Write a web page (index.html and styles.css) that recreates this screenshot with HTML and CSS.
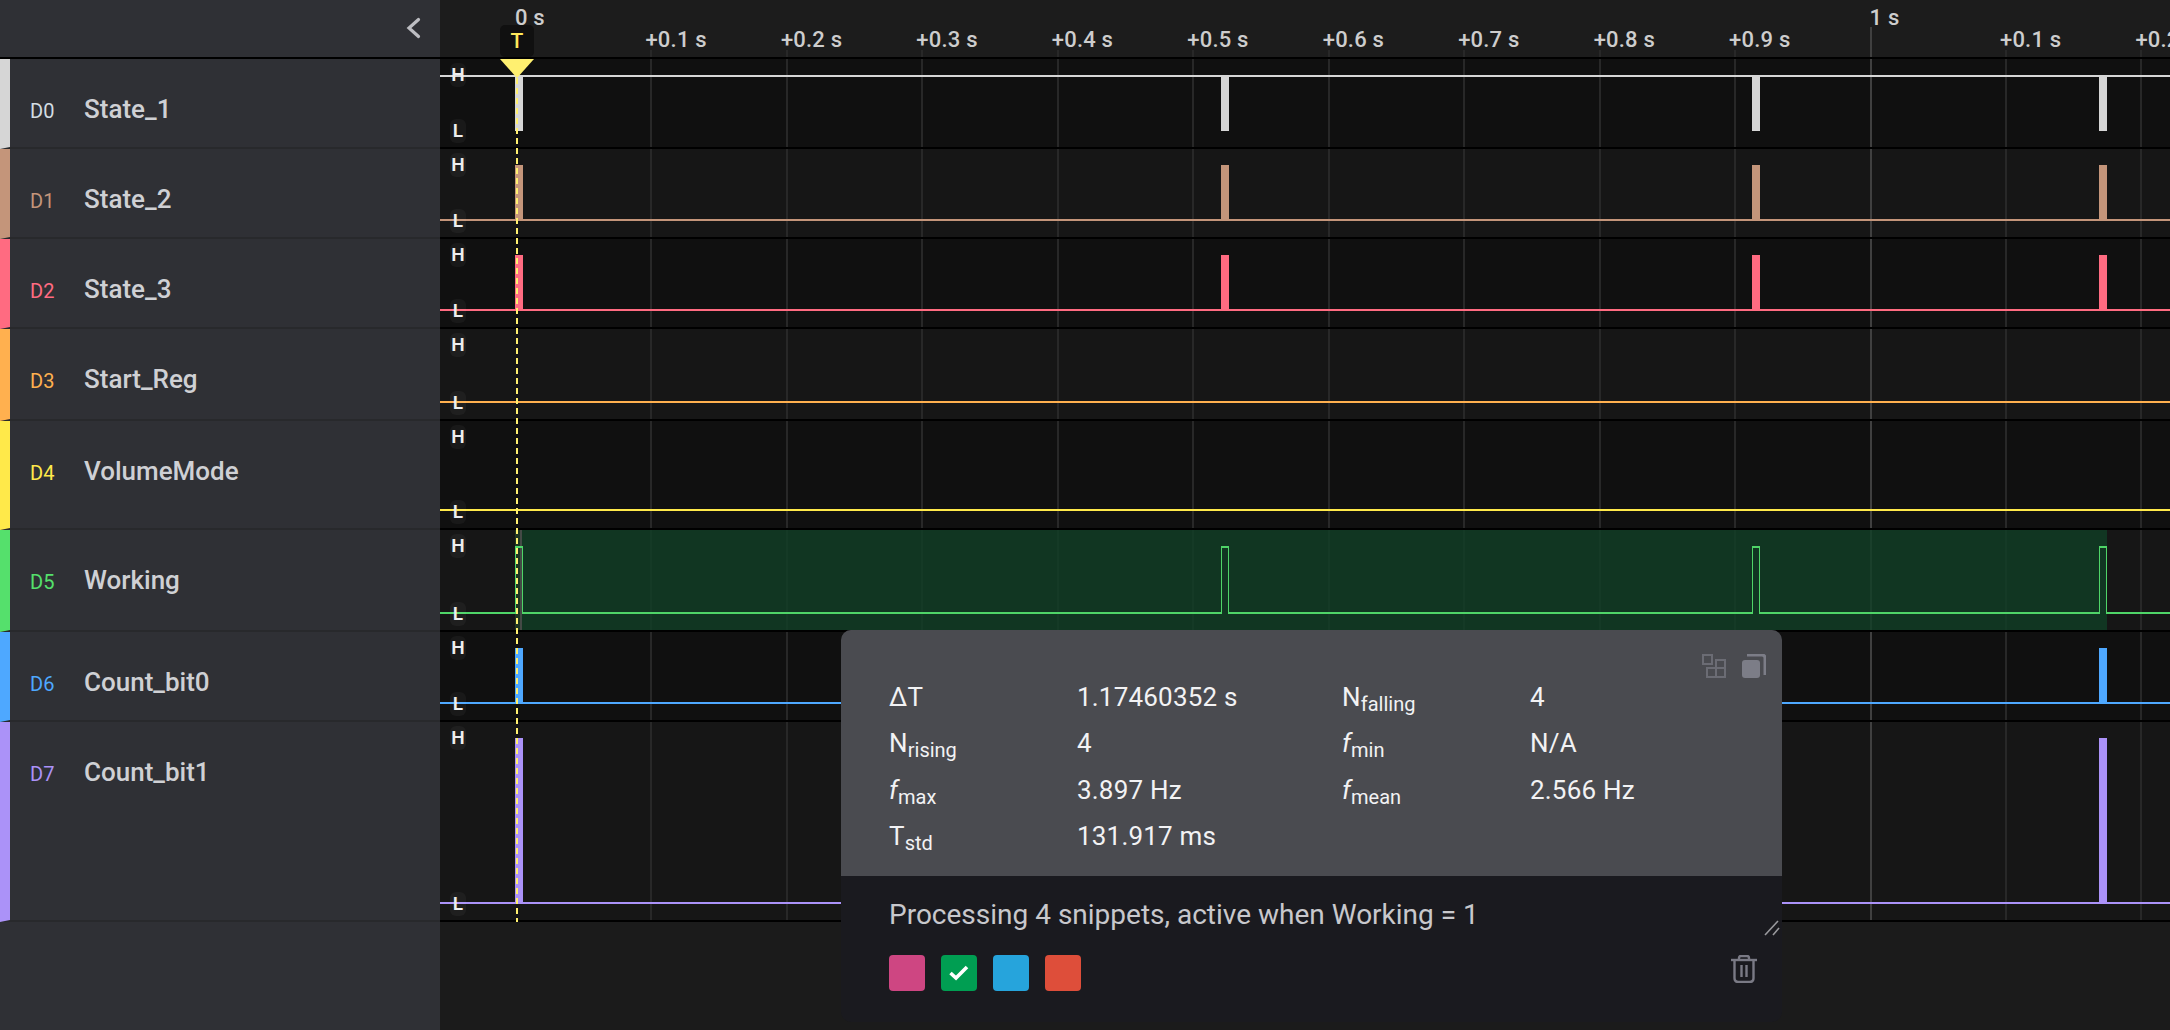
FILE: index.html
```html
<!DOCTYPE html>
<html lang="en">
<head>
  <meta charset="UTF-8">
  <title>Logic analyzer</title>
  <link rel="stylesheet" href="styles.css">
</head>
<body>

<div class="app">

  <!-- Channel list -->
  <aside class="sidebar">
    <div class="sidebar-top">
      <svg class="collapse" width="16" height="22" viewBox="0 0 16 22"><path d="M13.5 2.5 L4 11 L13.5 19.5" fill="none" stroke="#bdbdc2" stroke-width="3.2" stroke-linecap="round"/></svg>
    </div>
    <div class="channel ch0 h90"><span class="ch-id">D0</span><span class="ch-name">State_1</span></div>
    <div class="channel ch1 h90"><span class="ch-id">D1</span><span class="ch-name">State_2</span></div>
    <div class="channel ch2 h90"><span class="ch-id">D2</span><span class="ch-name">State_3</span></div>
    <div class="channel ch3 h92"><span class="ch-id">D3</span><span class="ch-name">Start_Reg</span></div>
    <div class="channel ch4 h109"><span class="ch-id">D4</span><span class="ch-name">VolumeMode</span></div>
    <div class="channel ch5 h102"><span class="ch-id">D5</span><span class="ch-name">Working</span></div>
    <div class="channel ch6 h90"><span class="ch-id">D6</span><span class="ch-name">Count_bit0</span></div>
    <div class="channel ch7 h200"><span class="ch-id">D7</span><span class="ch-name">Count_bit1</span></div>
  </aside>

  <main class="main">

    <!-- Time axis -->
    <div class="axis">
      <div class="tick major"><span>0 s</span></div>
      <div class="tick"><span>+0.1 s</span></div>
      <div class="tick"><span>+0.2 s</span></div>
      <div class="tick"><span>+0.3 s</span></div>
      <div class="tick"><span>+0.4 s</span></div>
      <div class="tick"><span>+0.5 s</span></div>
      <div class="tick"><span>+0.6 s</span></div>
      <div class="tick"><span>+0.7 s</span></div>
      <div class="tick"><span>+0.8 s</span></div>
      <div class="tick"><span>+0.9 s</span></div>
      <div class="tick major"><span>1 s</span></div>
      <div class="tick"><span>+0.1 s</span></div>
      <div class="tick"><span>+0.2 s</span></div>
    </div>

    <!-- Signals -->
    <div class="waves">
      <div class="grid">
        <i class="first"></i><i></i><i></i><i></i><i></i><i></i><i></i><i></i><i></i><i></i><i class="strong"></i><i></i><i></i>
      </div>

      <div class="wave h90">
        <svg class="trace" width="1730" height="90" fill="#d6d6d6">
          <rect x="0" y="16" width="1730" height="2"/>
          <rect x="75" y="16" width="8" height="56"/><rect x="781" y="16" width="8" height="56"/><rect x="1312" y="16" width="8" height="56"/><rect x="1659" y="16" width="8" height="56"/>
        </svg>
        <div class="levels"><b>H</b><b>L</b></div>
      </div>

      <div class="wave odd h90">
        <svg class="trace" width="1730" height="90" fill="#c4957a">
          <rect x="0" y="70" width="1730" height="2"/>
          <rect x="75" y="16" width="8" height="56"/><rect x="781" y="16" width="8" height="56"/><rect x="1312" y="16" width="8" height="56"/><rect x="1659" y="16" width="8" height="56"/>
        </svg>
        <div class="levels"><b>H</b><b>L</b></div>
      </div>

      <div class="wave h90">
        <svg class="trace" width="1730" height="90" fill="#ff6b81">
          <rect x="0" y="70" width="1730" height="2"/>
          <rect x="75" y="16" width="8" height="56"/><rect x="781" y="16" width="8" height="56"/><rect x="1312" y="16" width="8" height="56"/><rect x="1659" y="16" width="8" height="56"/>
        </svg>
        <div class="levels"><b>H</b><b>L</b></div>
      </div>

      <div class="wave odd h92">
        <svg class="trace" width="1730" height="92" fill="#ffb04f">
          <rect x="0" y="72" width="1730" height="2"/>
        </svg>
        <div class="levels"><b>H</b><b>L</b></div>
      </div>

      <div class="wave h109">
        <svg class="trace" width="1730" height="109" fill="#ffe94a">
          <rect x="0" y="88" width="1730" height="2"/>
        </svg>
        <div class="levels"><b>H</b><b>L</b></div>
      </div>

      <div class="wave odd h102">
        <svg class="trace" width="1730" height="102">
          <rect x="82" y="0" width="1585" height="100" fill="#103e26" opacity="0.8"/>
          <rect x="75" y="0" width="7" height="100" fill="#55e06c" opacity="0.16"/>
          <rect x="80" y="0" width="2" height="100" fill="#444a46"/>
          <path d="M0 83 H76 M82 83 H782 M788 83 H1313 M1319 83 H1660 M1666 83 H1730 M75 17 H83 M781 17 H789 M1312 17 H1320 M1659 17 H1667" fill="none" stroke="#4fd568" stroke-width="2"/>
          <path d="M75.5 17 V84 M82.5 17 V84 M781.5 17 V84 M788.5 17 V84 M1312.5 17 V84 M1319.5 17 V84 M1659.5 17 V84 M1666.5 17 V84" fill="none" stroke="#4fd568" stroke-width="1"/>
        </svg>
        <div class="levels"><b>H</b><b>L</b></div>
      </div>

      <div class="wave h90">
        <svg class="trace" width="1730" height="90" fill="#4ea8ff">
          <rect x="0" y="70" width="1730" height="2"/>
          <rect x="75" y="16" width="8" height="56"/><rect x="781" y="16" width="8" height="56"/><rect x="1312" y="16" width="8" height="56"/><rect x="1659" y="16" width="8" height="56"/>
        </svg>
        <div class="levels"><b>H</b><b>L</b></div>
      </div>

      <div class="wave odd h200">
        <svg class="trace" width="1730" height="200" fill="#ab92f8">
          <rect x="0" y="180" width="1730" height="2"/>
          <rect x="75" y="16" width="8" height="166"/><rect x="781" y="16" width="8" height="166"/><rect x="1312" y="16" width="8" height="166"/><rect x="1659" y="16" width="8" height="166"/>
        </svg>
        <div class="levels"><b>H</b><b>L</b></div>
      </div>
    </div>

    <!-- Trigger marker -->
    <div class="trigger">
      <div class="trigger-tag">T</div>
      <div class="trigger-head"></div>
      <div class="trigger-line"></div>
    </div>

    <!-- Measurement popup -->
    <section class="popup">
      <div class="popup-stats">
        <div class="popup-tools">
          <svg width="24" height="24" viewBox="0 0 24 24" fill="none" stroke="#6b6c74" stroke-width="2"><rect x="1" y="1" width="9" height="9"/><rect x="14" y="6" width="9" height="17"/><rect x="5" y="14" width="18" height="9"/></svg>
          <svg width="24" height="24" viewBox="0 0 24 24"><path d="M5 1 H20 Q23 1 23 4 V21" fill="none" stroke="#7c7d87" stroke-width="3"/><rect x="0" y="6" width="18" height="18" rx="3" fill="#7c7d87"/></svg>
        </div>
        <div class="stats">
          <span>ΔT</span><span>1.17460352 s</span><span>N<sub>falling</sub></span><span>4</span>
          <span>N<sub>rising</sub></span><span>4</span><span><em>f</em><sub>min</sub></span><span>N/A</span>
          <span><em>f</em><sub>max</sub></span><span>3.897 Hz</span><span><em>f</em><sub>mean</sub></span><span>2.566 Hz</span>
          <span>T<sub>std</sub></span><span>131.917 ms</span>
        </div>
      </div>
      <div class="popup-note">
        <p class="note-text">Processing 4 snippets, active when Working = 1</p>
        <svg class="grip" width="16" height="16" viewBox="0 0 16 16" stroke="#9a9a9e" stroke-width="1.6"><path d="M1 15 L14 1"/><path d="M9 15 L15 8"/></svg>
        <div class="note-foot">
          <div class="swatches">
            <span class="swatch pink"></span>
            <span class="swatch green"><svg width="20" height="16" viewBox="0 0 20 16"><path d="M1.5 8 L7 13 L18 2" fill="none" stroke="#fff" stroke-width="3.6"/></svg></span>
            <span class="swatch blue"></span>
            <span class="swatch red"></span>
          </div>
          <svg width="26" height="28" viewBox="0 0 26 28" fill="none" stroke="#7a7a85" stroke-width="2.4"><path d="M0 5 H26"/><path d="M8 5 V3 Q8 1 10 1 H16 Q18 1 18 3 V5"/><path d="M3.5 5 V23 Q3.5 27 7.5 27 H18.5 Q22.5 27 22.5 23 V5"/><path d="M10.5 10 V22"/><path d="M15.5 10 V22"/></svg>
        </div>
      </div>
    </section>

  </main>
</div>

</body>
</html>
```

FILE: styles.css
```css
/* General */
html, body {
  margin: 0;
  padding: 0;
  height: 100%;
  overflow: hidden;
  background-color: #1b1b1b;
  font-family: 'Roboto', 'Liberation Sans', sans-serif;
}

.app {
  display: flex;
  height: 100%;
}

/* Row heights, shared by channel list and signals */
.h90 { height: 90px; }
.h92 { height: 92px; }
.h102 { height: 102px; }
.h109 { height: 109px; }
.h200 { height: 200px; }

/* Channel list */
.sidebar {
  flex: 0 0 440px;
  background-color: #2f3035;
}

.sidebar-top {
  height: 57px;
  border-bottom: 2px solid #000;
  display: flex;
  align-items: center;
  justify-content: flex-end;
  padding-right: 19px;
}

.collapse {
  margin-bottom: 2px;
}

.channel {
  box-sizing: border-box;
  display: flex;
  align-items: baseline;
  padding-top: 35px;
  padding-left: 20px;
  border-left: 10px solid;
  border-bottom: 2px solid #28292c;
}

.ch-id {
  flex: 0 0 54px;
  font-size: 20px;
}

.ch-name {
  font-size: 26px;
  font-weight: 500;
  color: #cfd0d4;
}

.ch0 { border-left-color: #d6d6d6; }
.ch1 { border-left-color: #c4957a; }
.ch2 { border-left-color: #ff6b81; }
.ch3 { border-left-color: #ffb04f; }
.ch4 { border-left-color: #ffe94a; }
.ch5 { border-left-color: #55e06c; }
.ch6 { border-left-color: #4ea8ff; }
.ch7 { border-left-color: #ab92f8; }

.ch0 .ch-id { color: #d3dde3; }
.ch1 .ch-id { color: #c4957a; }
.ch2 .ch-id { color: #ff6b81; }
.ch3 .ch-id { color: #ffb04f; }
.ch4 .ch-id { color: #ffe94a; }
.ch5 .ch-id { color: #55e06c; }
.ch6 .ch-id { color: #4ea8ff; }
.ch7 .ch-id { color: #ab92f8; }

/* Main area */
.main {
  flex: 1;
  min-width: 0;
  position: relative;
  overflow: hidden;
}

/* Time axis */
.axis {
  height: 57px;
  border-bottom: 2px solid #000;
  background-color: #1c1c1c;
  display: flex;
  padding-left: 75px;
  overflow: hidden;
}

.tick {
  flex: 0 0 135.46px;
  display: flex;
  flex-direction: column;
  justify-content: flex-end;
  font-size: 22px;
  font-weight: 500;
  letter-spacing: 0.2px;
  color: #cdcdcd;
  white-space: nowrap;
}

.tick span {
  margin-left: -5px;
  margin-bottom: -2px;
}

.tick::after {
  content: "";
  width: 2px;
  height: 7px;
  background-color: #282828;
}

.tick.major span {
  margin-left: 0;
  margin-bottom: -3px;
}

.tick.major::after {
  height: 30px;
  background-color: #404040;
}

.tick.major:first-child::after {
  background-color: transparent;
}

/* Signals */
.waves {
  position: relative;
}

.wave {
  position: relative;
  background-color: #101010;
}

.wave.odd {
  background-color: #161616;
}

.wave::after {
  content: "";
  position: absolute;
  left: 0;
  right: 0;
  bottom: 0;
  height: 2px;
  background-color: #000;
  z-index: 3;
}

.trace {
  display: block;
  position: relative;
  z-index: 2;
}

.grid {
  position: absolute;
  top: 0;
  bottom: 0;
  left: 75px;
  display: flex;
  z-index: 1;
}

.grid i {
  flex: 0 0 135.46px;
  box-sizing: border-box;
  border-left: 2px solid #282828;
}

.grid i.strong {
  border-left-color: #404040;
}

.grid i.first {
  border-left-color: transparent;
}

.levels {
  position: absolute;
  left: 10px;
  top: 4px;
  bottom: 6px;
  z-index: 4;
  display: flex;
  flex-direction: column;
  justify-content: space-between;
}

.levels b {
  width: 16px;
  height: 24px;
  line-height: 24px;
  text-align: center;
  font-size: 19px;
  font-weight: 600;
  color: #eee;
  background-color: rgba(255, 255, 255, 0.04);
  border-radius: 6px;
}

/* Trigger marker */
.trigger {
  position: absolute;
  left: 60px;
  top: 25px;
  width: 34px;
  height: 897px;
  z-index: 5;
  display: flex;
  flex-direction: column;
  align-items: center;
}

.trigger-tag {
  width: 34px;
  height: 32px;
  line-height: 32px;
  text-align: center;
  font-size: 21px;
  font-weight: 500;
  color: #ffe95c;
  background-color: #101010;
  border-radius: 5px;
  margin-bottom: 2px;
}

.trigger-head {
  width: 0;
  height: 0;
  border-left: 17px solid transparent;
  border-right: 17px solid transparent;
  border-top: 19px solid #fff070;
}

.trigger-line {
  flex: 1;
  width: 2px;
  background: repeating-linear-gradient(to bottom, #fff070 0, #fff070 6px, transparent 6px, transparent 10px);
}

/* Popup */
.popup {
  position: absolute;
  left: 401px;
  top: 630px;
  width: 941px;
  height: 392px;
  z-index: 6;
  border-radius: 10px;
  overflow: hidden;
  display: flex;
  flex-direction: column;
  background-color: #1a1a1f;
}

.popup-stats {
  height: 246px;
  box-sizing: border-box;
  background-color: #4a4b50;
  padding: 44px 48px 0;
  position: relative;
}

.popup-tools {
  position: absolute;
  top: 24px;
  right: 16px;
  display: flex;
  gap: 16px;
}

.stats {
  display: grid;
  grid-template-columns: 188px 265px 188px 1fr;
  grid-auto-rows: 46.4px;
  font-size: 26px;
  letter-spacing: 0.2px;
  color: #f2f2f4;
  line-height: 46px;
}

.stats sub {
  font-size: 20px;
  letter-spacing: 0;
  line-height: 0;
  vertical-align: -5px;
}

.popup-note {
  flex: 1;
  position: relative;
  padding: 0 48px;
  display: flex;
  flex-direction: column;
}

.note-text {
  margin: 0;
  padding-top: 22px;
  font-size: 28px;
  line-height: 34px;
  color: #c8c8cc;
}

.grip {
  position: absolute;
  right: 2px;
  top: 44px;
}

.note-foot {
  display: flex;
  justify-content: space-between;
  align-items: flex-start;
  margin-top: 23px;
  margin-right: -23px;
}

.swatches {
  display: flex;
  gap: 16px;
}

.swatch {
  width: 36px;
  height: 36px;
  border-radius: 4px;
  display: flex;
  align-items: center;
  justify-content: center;
}

.pink { background-color: #ce4682; }
.green { background-color: #009e52; }
.blue { background-color: #26a4dc; }
.red { background-color: #de4e3a; }
```
